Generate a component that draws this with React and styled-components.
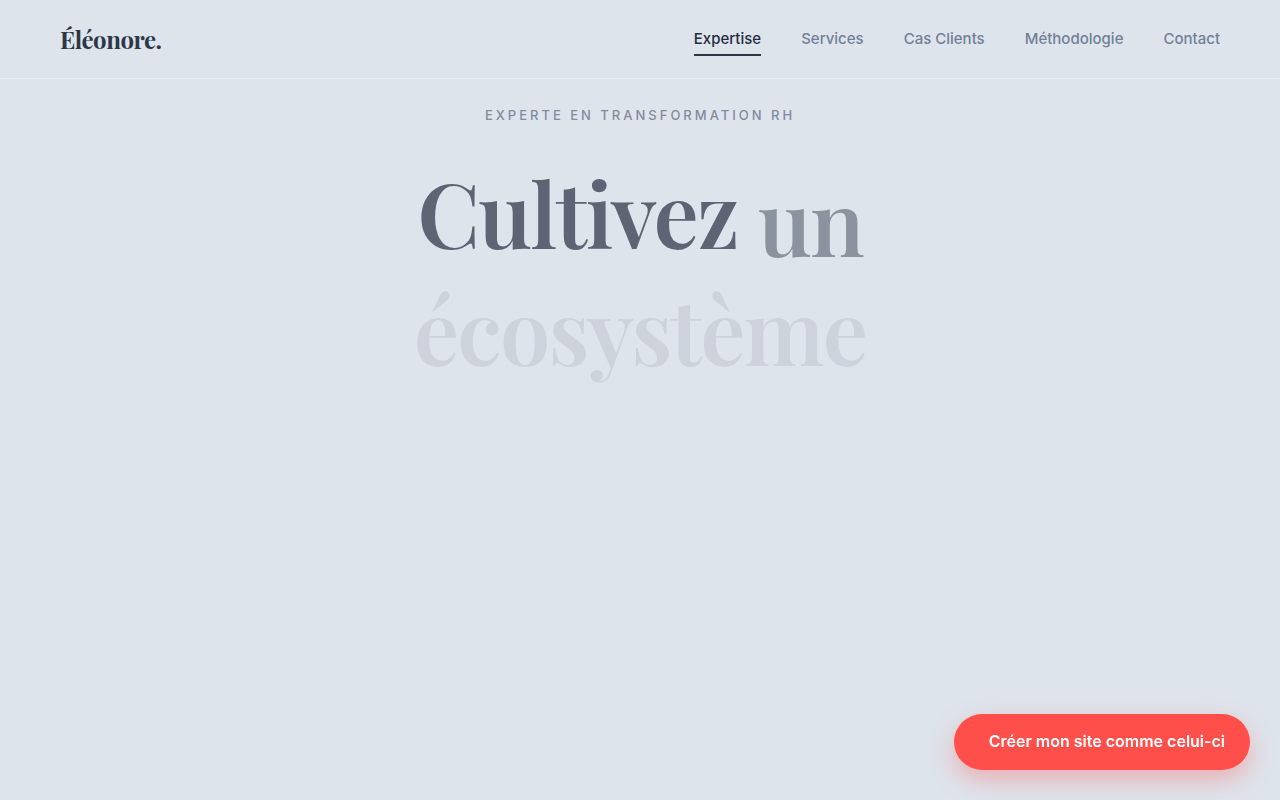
import styled, { createGlobalStyle } from "styled-components";

const GlobalStyle = createGlobalStyle`
  * {
    box-sizing: border-box;
  }

  body {
    margin: 0;
    background-color: #dee4ec;
    color: #2d3748;
    font-family: Inter, sans-serif;
    -webkit-font-smoothing: antialiased;
  }
`;

const Header = styled.header`
  display: flex;
  align-items: center;
  justify-content: space-between;
  height: 79px;
  padding: 0 60px;
  border-bottom: 1px solid #e8ecf2;
`;

const Logo = styled.a`
  color: #2d3748;
  font-family: "Playfair Display", "Liberation Serif", serif;
  font-size: 24px;
  font-weight: 700;
  letter-spacing: -0.02em;
  line-height: 32px;
  text-decoration: none;
`;

const Nav = styled.nav`
  display: flex;
  gap: 40px;
`;

const NavLink = styled.a`
  padding: 7px 0 5px;
  border-bottom: 2px solid ${(props) => (props.$active ? "#2d3748" : "transparent")};
  color: ${(props) => (props.$active ? "#252d3d" : "#718096")};
  font-size: 15px;
  font-weight: 500;
  line-height: 20px;
  text-decoration: none;
`;

const Hero = styled.main`
  display: flex;
  flex-direction: column;
  align-items: center;
  gap: 29px;
  padding: 26px 24px 0;
  text-align: center;
`;

const Eyebrow = styled.p`
  margin: 0;
  color: #828b9d;
  font-size: 13px;
  font-weight: 500;
  letter-spacing: 3px;
  line-height: 20px;
  text-transform: uppercase;
`;

const Title = styled.h1`
  margin: 0;
  font-family: "Playfair Display", "Liberation Serif", serif;
  font-size: 90px;
  font-weight: 600;
  letter-spacing: -0.02em;
  line-height: 117px;
`;

const Line = styled.span`
  display: flex;
  justify-content: center;
  gap: 20px;
`;

const Word = styled.span`
  color: ${(props) => props.$color};
  transform: translateY(${(props) => props.$rise}px);
`;

const FloatingButton = styled.button`
  position: fixed;
  right: 30px;
  bottom: 30px;
  height: 56px;
  padding: 0 25px 2px 35px;
  border: none;
  border-radius: 28px;
  background-color: #ff4f4b;
  box-shadow: 0 10px 25px rgba(255, 79, 75, 0.35);
  color: white;
  font-family: inherit;
  font-size: 16px;
  font-weight: 600;
  line-height: 24px;
  cursor: pointer;
`;

const links = ["Expertise", "Services", "Cas Clients", "Méthodologie", "Contact"];

const lines = [
  [
    { text: "Cultivez", color: "#5d6474", rise: 0 },
    { text: "un", color: "#8b939e", rise: 8 },
  ],
  [{ text: "écosystème", color: "#cdd2dc", rise: 0 }],
];

export default function App() {
  return (
    <>
      <GlobalStyle />
      <Header>
        <Logo href="#">Éléonore.</Logo>
        <Nav>
          {links.map((link, index) => (
            <NavLink key={link} href="#" $active={index === 0}>
              {link}
            </NavLink>
          ))}
        </Nav>
      </Header>
      <Hero>
        <Eyebrow>Experte en transformation RH</Eyebrow>
        <Title>
          {lines.map((words, index) => (
            <Line key={index}>
              {words.map((word) => (
                <Word key={word.text} $color={word.color} $rise={word.rise}>
                  {word.text}
                </Word>
              ))}
            </Line>
          ))}
        </Title>
      </Hero>
      <FloatingButton type="button">Créer mon site comme celui-ci</FloatingButton>
    </>
  );
}
